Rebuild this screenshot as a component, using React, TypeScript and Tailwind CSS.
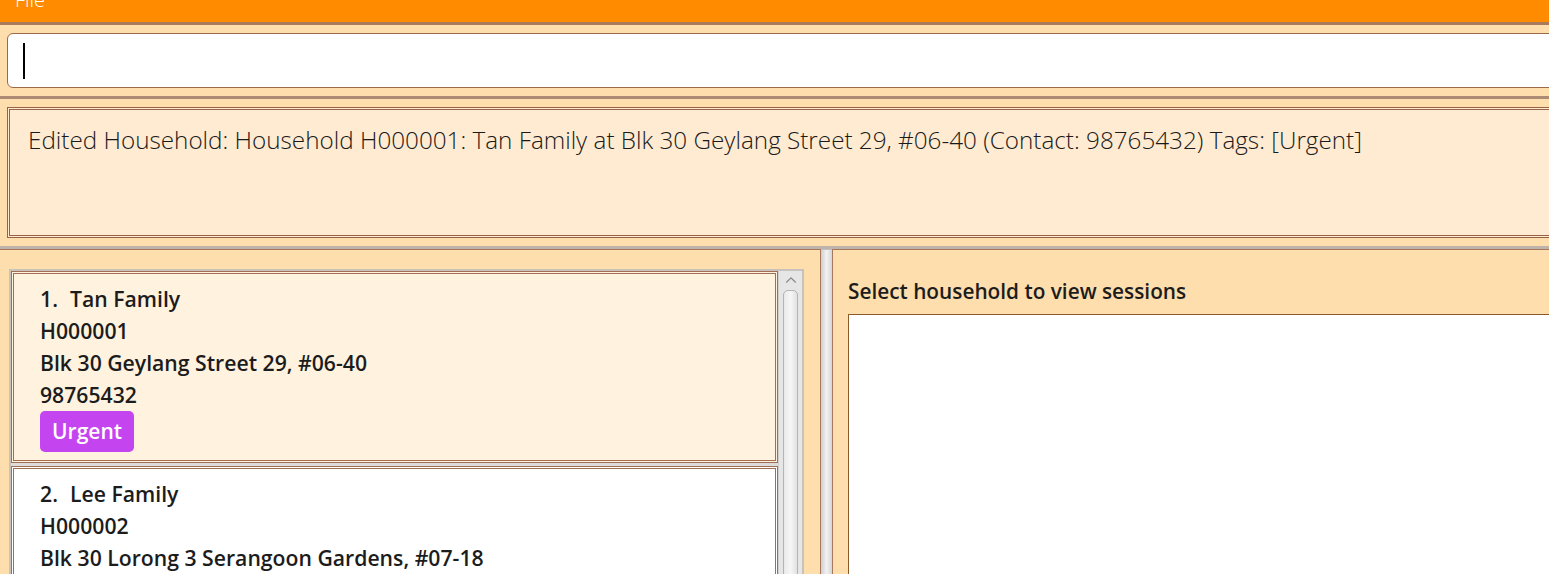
import React from "react";

const font = { fontFamily: '"Open Sans", "Noto Sans", sans-serif' };

function Card({
  index,
  name,
  id,
  address,
  phone,
  tag,
  selected,
}: {
  index: number;
  name: string;
  id: string;
  address: string;
  phone: string;
  tag?: string;
  selected?: boolean;
}) {
  return (
    <div
      className={
        "border-[3px] border-double border-[#a26f55] pl-[26px] pt-[9px] pb-[8px] text-[#1c1c1c] font-semibold text-[21.2px] leading-[32px] " +
        (selected ? "bg-[#fff3e0]" : "bg-white")
      }
    >
      <div className="flex">
        <span className="w-[30px]">{index}.</span>
        <span>{name}</span>
      </div>
      <div>{id}</div>
      <div>{address}</div>
      <div>{phone}</div>
      {tag && (
        <div className="flex">
          <span className="bg-[#c445f0] text-white rounded-[5px] px-[12px] h-[41px] leading-[41px] text-[21px] font-semibold">
            {tag}
          </span>
        </div>
      )}
    </div>
  );
}

export default function App() {
  return (
    <div className="w-[1549px] h-[574px] overflow-hidden bg-[#ffdead]" style={font}>
      <div className="w-[1665px]">
        {/* menu bar */}
        <div className="h-[22px] bg-[#ff8c00] overflow-hidden">
          <div className="pl-[15px] -mt-[13px] text-white text-[20px] leading-[26px] font-light">File</div>
        </div>
        <div className="h-[3px] bg-[#a97a5c]" />

        {/* command box */}
        <div className="px-[7px] py-[8px]">
          <div className="h-[55px] bg-white border-[1.5px] border-[#9b6a48] rounded-[6px] flex items-center pl-[15px]">
            <div className="w-[1.5px] h-[36px] bg-black" />
          </div>
        </div>
        <div className="h-[3px] bg-[#ad8a74]" />

        {/* result box */}
        <div className="px-[7px] py-[8px]">
          <div className="h-[131px] border-[3px] border-double border-[#9a6244] bg-[#ffebd2] pl-[18px] pt-[15px]">
            <div className="text-[24.25px] leading-[30px] font-light text-[#1a1a1a] whitespace-nowrap">
              Edited Household: Household H000001: Tan Family at Blk 30 Geylang Street 29, #06-40 (Contact: 98765432) Tags: [Urgent]
            </div>
          </div>
        </div>
        <div className="h-[3px] bg-[#bdb3aa]" />

        {/* panes */}
        <div className="flex h-[330px]">
          <div className="w-[821px] border-t border-r border-[#a8785c] pl-[9px] pt-[19px]">
            <div className="w-[795px] h-[400px] border-2 border-[#c8c2bc] bg-[#dcdcdc] flex">
              <div className="w-[767px] flex flex-col gap-[3px]">
                <Card
                  index={1}
                  name="Tan Family"
                  id="H000001"
                  address="Blk 30 Geylang Street 29, #06-40"
                  phone="98765432"
                  tag="Urgent"
                  selected
                />
                <Card
                  index={2}
                  name="Lee Family"
                  id="H000002"
                  address="Blk 30 Lorong 3 Serangoon Gardens, #07-18"
                  phone="91234567"
                />
              </div>
              {/* scrollbar */}
              <div className="flex-1 bg-[#e6e6e6] border-l border-[#d0d0d0] flex flex-col items-center">
                <svg width="14" height="14" viewBox="0 0 14 14" className="mt-[3px]">
                  <path d="M2 9 L7 4 L12 9" fill="none" stroke="#8a8a8a" strokeWidth="1.3" />
                </svg>
                <div className="mt-[3px] w-[15px] h-[400px] rounded-[5px] border border-[#b4b4b4] bg-gradient-to-r from-[#e9e9e9] via-[#f6f6f6] to-[#e2e2e2]" />
              </div>
            </div>
          </div>
          {/* divider */}
          <div className="w-[11px] border-t border-[#c0c0c0] bg-gradient-to-r from-[#cfcfcf] via-[#f2f2f2] to-[#d6d6d6]" />
          <div className="flex-1 border-t border-l border-[#a8785c] pl-[15px] pt-[27px] flex flex-col">
            <div className="text-[20.8px] leading-[28px] font-semibold text-[#1c1c1c] h-[37px]">
              Select household to view sessions
            </div>
            <div className="flex-1 bg-white border border-[#8b5a2b]" />
          </div>
        </div>
      </div>
    </div>
  );
}
